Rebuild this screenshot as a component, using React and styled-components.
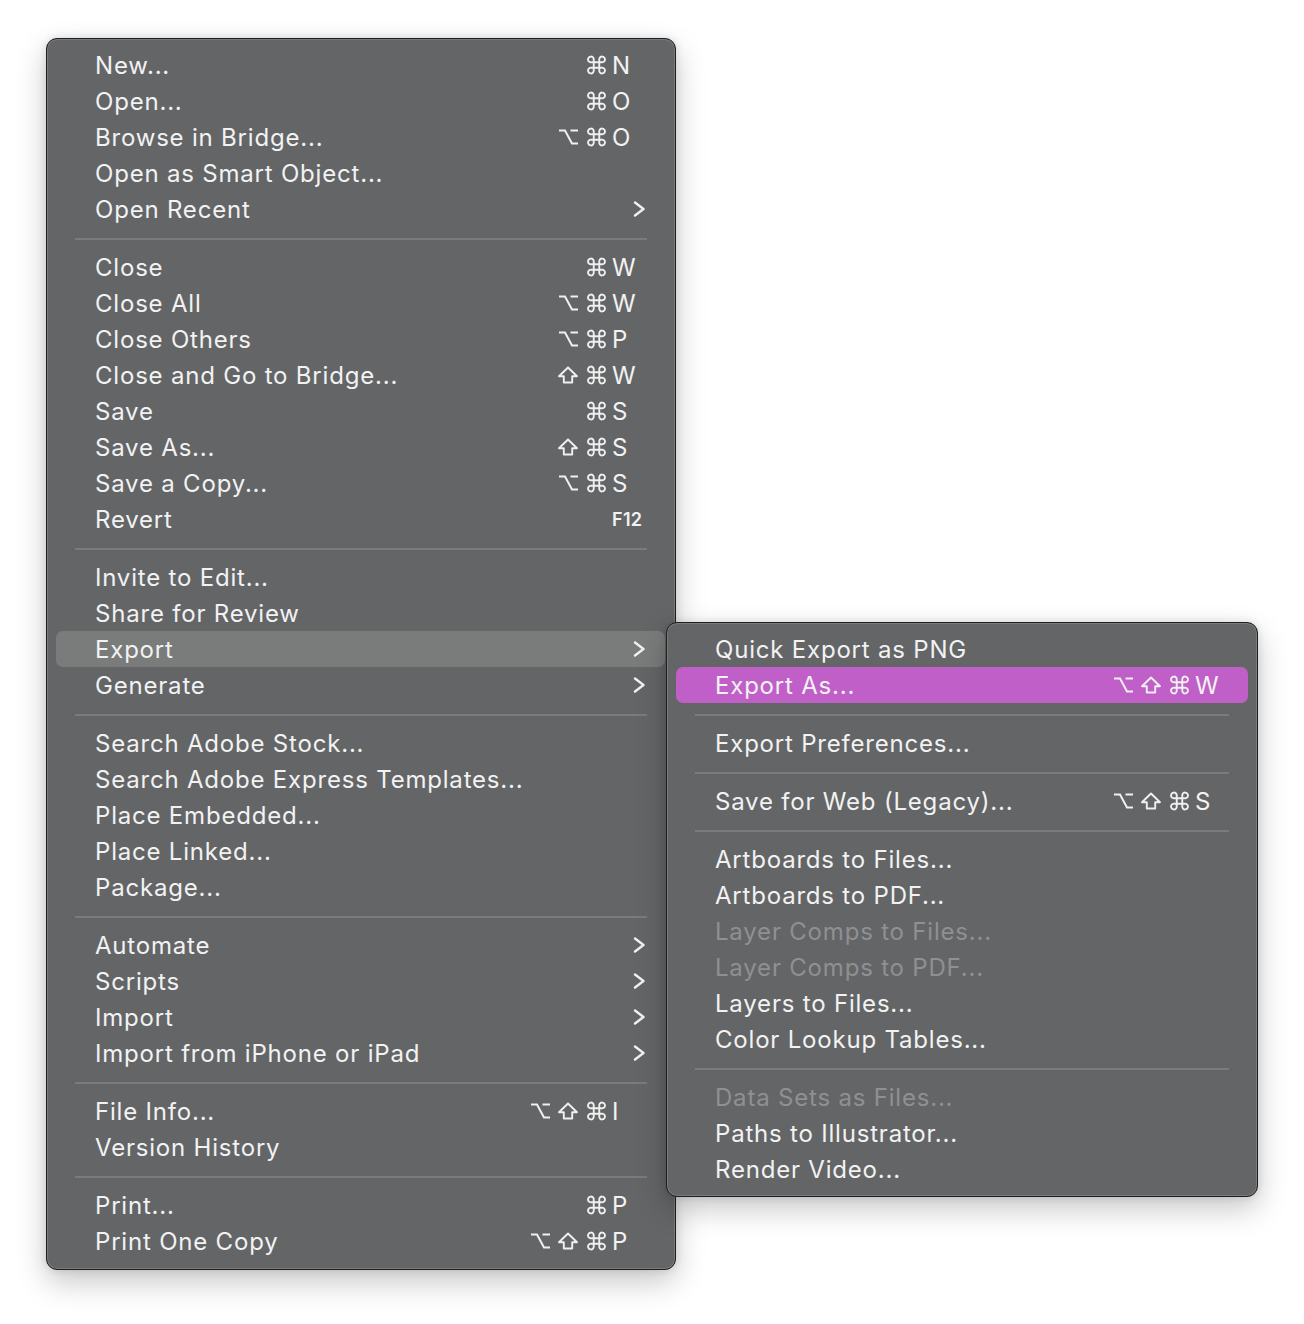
import React from "react";
import styled, { createGlobalStyle } from "styled-components";

const Global = createGlobalStyle`
  html, body { margin: 0; padding: 0; background: #ffffff; }
  body { font-family: Inter, "Noto Sans", "DejaVu Sans", sans-serif; -webkit-font-smoothing: antialiased; }
`;

const Page = styled.div`
  width: 1304px;
  height: 1324px;
  box-sizing: border-box;
  padding: 38px 0 0 46px;
  display: flex;
  align-items: flex-start;
  background: #ffffff;
`;

const MenuPanel = styled.div`
  width: ${(p) => p.$width}px;
  box-sizing: border-box;
  background: #646567;
  border: 1px solid #1f1f20;
  border-radius: 11px;
  box-shadow: inset 0 0 0 1px #7a7b7d, 0 12px 30px rgba(0, 0, 0, 0.22), 0 0 8px rgba(0, 0, 0, 0.12);
  padding: 8px 0 ${(p) => p.$padBottom}px;
  display: flex;
  flex-direction: column;
  flex-shrink: 0;
`;

const SubPanel = styled(MenuPanel)`
  margin-left: -10px;
  margin-top: 584px;
  position: relative;
  z-index: 2;
`;

const Row = styled.div`
  height: 36px;
  margin: 0 ${(p) => p.$mr}px 0 9px;
  padding: 0 20px 0 39px;
  border-radius: 7px;
  display: flex;
  align-items: center;
  font-size: 24px;
  letter-spacing: 0.8px;
  color: ${(p) => (p.$disabled ? "#8f9092" : "#f2f2f2")};
  background: ${(p) =>
    p.$active === "gray" ? "#7a7b7b" : p.$active === "purple" ? "#c15fc8" : "transparent"};
`;

const Label = styled.span`
  flex: 1;
  white-space: nowrap;
`;

const Mods = styled.span`
  display: flex;
  justify-content: flex-end;
  align-items: center;
  margin-right: 5px;
`;

const ModCell = styled.span`
  width: 28px;
  height: 20px;
  display: flex;
  align-items: center;
  justify-content: flex-end;
`;

const Key = styled.span`
  width: 33px;
  font-size: ${(p) => (p.$small ? "18px" : "24px")};
  font-weight: ${(p) => (p.$small ? 600 : 400)};
  letter-spacing: ${(p) => (p.$small ? "0.3px" : "0")};
  white-space: nowrap;
`;

const Separator = styled.div`
  height: 2px;
  margin: 11px 28px 9px;
  background: #7a7b7d;
`;

const Chevron = () => (
  <svg width="33" height="20" viewBox="0 0 33 20" style={{ display: "block" }}>
    <path d="M23 3.5 L31.5 10 L23 16.5" fill="none" stroke="#f0f0f0" strokeWidth="2.4" strokeLinecap="round" strokeLinejoin="round" />
  </svg>
);

const CmdIcon = () => (
  <svg width="21" height="20" viewBox="0 0 19 18">
    <path
      d="M7 6.5 V11.5 M12 6.5 V11.5 M7 6.5 H12 M7 11.5 H12 M7 6.5 H5 A2.6 2.6 0 1 1 7 4.2 V6.5 M12 6.5 V4.2 A2.6 2.6 0 1 1 14 6.5 H12 M12 11.5 H14 A2.6 2.6 0 1 1 12 13.8 V11.5 M7 11.5 V13.8 A2.6 2.6 0 1 1 5 11.5 H7"
      fill="none"
      stroke="#f0f0f0"
      strokeWidth="1.7"
      strokeLinejoin="round"
    />
  </svg>
);

const OptIcon = () => (
  <svg width="21" height="18" viewBox="0 0 21 18">
    <path d="M1 2.5 H7 L14 15.5 H20 M12.5 2.5 H20" fill="none" stroke="#f0f0f0" strokeWidth="2" strokeLinejoin="miter" />
  </svg>
);

const ShiftIcon = () => (
  <svg width="22" height="18" viewBox="0 0 22 18">
    <path d="M11 1.5 L20 10.2 H15.2 V16.5 H6.8 V10.2 H2 Z" fill="none" stroke="#f0f0f0" strokeWidth="1.9" strokeLinejoin="round" />
  </svg>
);

const ICONS = { opt: OptIcon, shift: ShiftIcon, cmd: CmdIcon };

function Item({ label, mods, k, small, sub, disabled, active, mr }) {
  return (
    <Row $disabled={disabled} $active={active} $mr={mr}>
      <Label>{label}</Label>
      {mods && (
        <Mods>
          {mods.map((m) => {
            const Icon = ICONS[m];
            return (
              <ModCell key={m}>
                <Icon />
              </ModCell>
            );
          })}
        </Mods>
      )}
      {k ? <Key $small={small}>{k}</Key> : sub ? <Chevron /> : null}
    </Row>
  );
}

const mainGroups = [
  [
    { label: "New...", mods: ["cmd"], k: "N" },
    { label: "Open...", mods: ["cmd"], k: "O" },
    { label: "Browse in Bridge...", mods: ["opt", "cmd"], k: "O" },
    { label: "Open as Smart Object..." },
    { label: "Open Recent", sub: true },
  ],
  [
    { label: "Close", mods: ["cmd"], k: "W" },
    { label: "Close All", mods: ["opt", "cmd"], k: "W" },
    { label: "Close Others", mods: ["opt", "cmd"], k: "P" },
    { label: "Close and Go to Bridge...", mods: ["shift", "cmd"], k: "W" },
    { label: "Save", mods: ["cmd"], k: "S" },
    { label: "Save As...", mods: ["shift", "cmd"], k: "S" },
    { label: "Save a Copy...", mods: ["opt", "cmd"], k: "S" },
    { label: "Revert", k: "F12", small: true },
  ],
  [
    { label: "Invite to Edit..." },
    { label: "Share for Review" },
    { label: "Export", sub: true, active: "gray" },
    { label: "Generate", sub: true },
  ],
  [
    { label: "Search Adobe Stock..." },
    { label: "Search Adobe Express Templates..." },
    { label: "Place Embedded..." },
    { label: "Place Linked..." },
    { label: "Package..." },
  ],
  [
    { label: "Automate", sub: true },
    { label: "Scripts", sub: true },
    { label: "Import", sub: true },
    { label: "Import from iPhone or iPad", sub: true },
  ],
  [
    { label: "File Info...", mods: ["opt", "shift", "cmd"], k: "I" },
    { label: "Version History" },
  ],
  [
    { label: "Print...", mods: ["cmd"], k: "P" },
    { label: "Print One Copy", mods: ["opt", "shift", "cmd"], k: "P" },
  ],
];

const subGroups = [
  [
    { label: "Quick Export as PNG" },
    { label: "Export As...", mods: ["opt", "shift", "cmd"], k: "W", active: "purple" },
  ],
  [{ label: "Export Preferences..." }],
  [{ label: "Save for Web (Legacy)...", mods: ["opt", "shift", "cmd"], k: "S" }],
  [
    { label: "Artboards to Files..." },
    { label: "Artboards to PDF..." },
    { label: "Layer Comps to Files...", disabled: true },
    { label: "Layer Comps to PDF...", disabled: true },
    { label: "Layers to Files..." },
    { label: "Color Lookup Tables..." },
  ],
  [
    { label: "Data Sets as Files...", disabled: true },
    { label: "Paths to Illustrator..." },
    { label: "Render Video..." },
  ],
];

function Groups({ groups, mr }) {
  return groups.map((g, gi) => (
    <React.Fragment key={gi}>
      {gi > 0 && <Separator />}
      {g.map((it) => (
        <Item key={it.label} {...it} mr={mr} />
      ))}
    </React.Fragment>
  ));
}

export default function App() {
  return (
    <>
      <Global />
      <Page>
        <MenuPanel $width={630} $padBottom={10}>
          <Groups groups={mainGroups} mr={10} />
        </MenuPanel>
        <SubPanel $width={592} $padBottom={9}>
          <Groups groups={subGroups} mr={9} />
        </SubPanel>
      </Page>
    </>
  );
}
